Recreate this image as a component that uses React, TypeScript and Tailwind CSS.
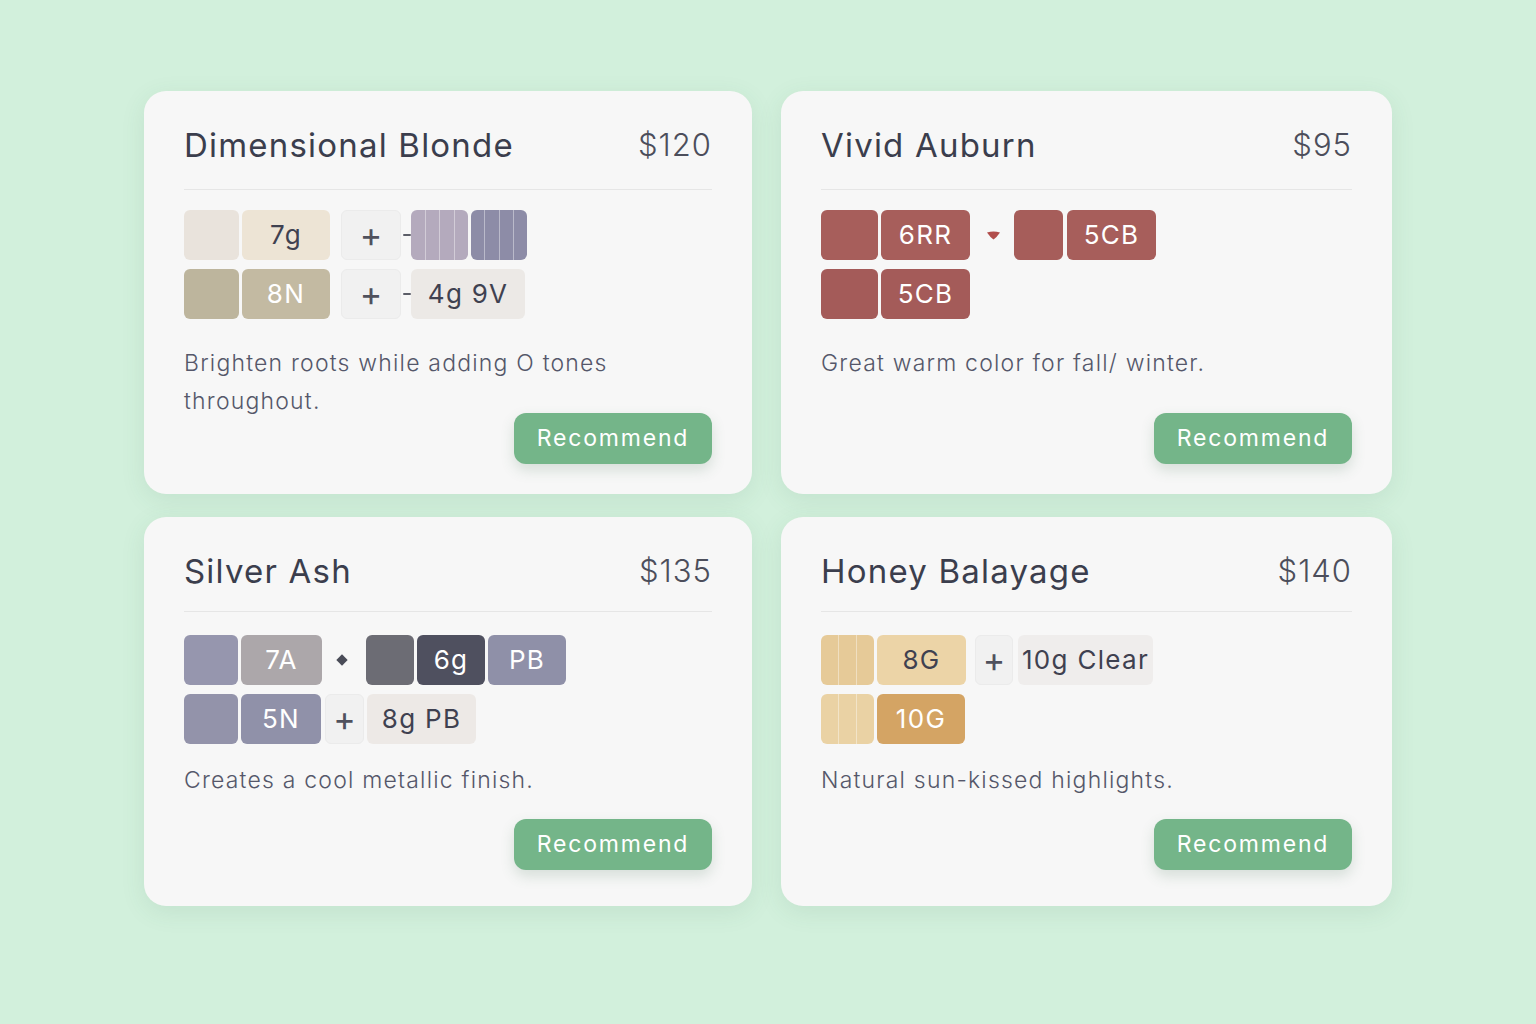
import React from 'react';

type Chip =
  | { kind: 'swatch'; w: number; bg: string; label?: string; light?: boolean; stripes?: number; ml?: number }
  | { kind: 'plus'; w: number; ml?: number }
  | { kind: 'dash'; ml?: number }
  | { kind: 'heart'; ml?: number }
  | { kind: 'diamond'; ml?: number };

interface Formula {
  title: string;
  price: string;
  rows: Chip[][];
  note: React.ReactNode;
  compact?: boolean;
}

const formulas: Formula[] = [
  {
    title: 'Dimensional Blonde',
    price: '$120',
    rows: [
      [
        { kind: 'swatch', w: 55, bg: 'bg-[#e9e3dc]' },
        { kind: 'swatch', w: 88, bg: 'bg-[#ede4d5]', label: '7g', ml: 3 },
        { kind: 'plus', w: 60, ml: 11 },
        { kind: 'dash', ml: 2 },
        { kind: 'swatch', w: 57, bg: 'bg-[#b4aabd]', stripes: 4 },
        { kind: 'swatch', w: 56, bg: 'bg-[#8d8ca7]', stripes: 4, ml: 3 },
      ],
      [
        { kind: 'swatch', w: 55, bg: 'bg-[#bdb59d]' },
        { kind: 'swatch', w: 88, bg: 'bg-[#c3baa2]', label: '8N', light: true, ml: 3 },
        { kind: 'plus', w: 60, ml: 11 },
        { kind: 'dash', ml: 2 },
        { kind: 'swatch', w: 114, bg: 'bg-[#ece9e6]', label: '4g 9V' },
      ],
    ],
    note: 'Brighten roots while adding O tones throughout.',
  },
  {
    title: 'Vivid Auburn',
    price: '$95',
    rows: [
      [
        { kind: 'swatch', w: 57, bg: 'bg-[#a75e5b]' },
        { kind: 'swatch', w: 89, bg: 'bg-[#a75e5b]', label: '6RR', light: true, ml: 3 },
        { kind: 'heart', ml: 16 },
        { kind: 'swatch', w: 49, bg: 'bg-[#a65d5a]', ml: 13 },
        { kind: 'swatch', w: 89, bg: 'bg-[#a75e5b]', label: '5CB', light: true, ml: 4 },
      ],
      [
        { kind: 'swatch', w: 57, bg: 'bg-[#a45b59]' },
        { kind: 'swatch', w: 89, bg: 'bg-[#a45b59]', label: '5CB', light: true, ml: 3 },
      ],
    ],
    note: 'Great warm color for fall/ winter.',
  },
  {
    title: 'Silver Ash',
    price: '$135',
    compact: true,
    rows: [
      [
        { kind: 'swatch', w: 54, bg: 'bg-[#9696ae]' },
        { kind: 'swatch', w: 81, bg: 'bg-[#aca7aa]', label: '7A', light: true, ml: 3 },
        { kind: 'diamond', ml: 16 },
        { kind: 'swatch', w: 48, bg: 'bg-[#6c6c74]', ml: 20 },
        { kind: 'swatch', w: 68, bg: 'bg-[#4f505f]', label: '6g', light: true, ml: 3 },
        { kind: 'swatch', w: 78, bg: 'bg-[#8f90a8]', label: 'PB', light: true, ml: 3 },
      ],
      [
        { kind: 'swatch', w: 54, bg: 'bg-[#9393aa]' },
        { kind: 'swatch', w: 80, bg: 'bg-[#9091a9]', label: '5N', light: true, ml: 3 },
        { kind: 'plus', w: 39, ml: 4 },
        { kind: 'swatch', w: 109, bg: 'bg-[#ede9e6]', label: '8g PB', ml: 3 },
      ],
    ],
    note: 'Creates a cool metallic finish.',
  },
  {
    title: 'Honey Balayage',
    price: '$140',
    compact: true,
    rows: [
      [
        { kind: 'swatch', w: 53, bg: 'bg-[#e6ca98]', stripes: 3 },
        { kind: 'swatch', w: 89, bg: 'bg-[#ecd4a7]', label: '8G', ml: 3 },
        { kind: 'plus', w: 38, ml: 9 },
        { kind: 'swatch', w: 135, bg: 'bg-[#efedec]', label: '10g Clear', ml: 5 },
      ],
      [
        { kind: 'swatch', w: 53, bg: 'bg-[#ead2a4]', stripes: 3 },
        { kind: 'swatch', w: 88, bg: 'bg-[#d4a464]', label: '10G', light: true, ml: 3 },
      ],
    ],
    note: 'Natural sun-kissed highlights.',
  },
];

function ChipView({ chip }: { chip: Chip }) {
  const ml = chip.ml ?? 0;
  if (chip.kind === 'plus') {
    return (
      <div
        className="flex h-full items-center justify-center rounded-md border border-[#ebebeb] bg-[#f1f1f1] text-[34px] leading-none text-[#4f515d]"
        style={{ width: chip.w, marginLeft: ml }}
      >
        +
      </div>
    );
  }
  if (chip.kind === 'dash') {
    return <div className="h-[2px] w-[8px] rounded bg-[#5c5e68]" style={{ marginLeft: ml }} />;
  }
  if (chip.kind === 'heart') {
    return (
      <svg width="15" height="9" viewBox="0 0 15 9" style={{ marginLeft: ml }}>
        <path d="M1 1.5 Q7.5 -0.5 14 1.5 Q11 6 7.5 8.5 Q4 6 1 1.5 Z" fill="#b14d4b" />
      </svg>
    );
  }
  if (chip.kind === 'diamond') {
    return <div className="h-[8px] w-[8px] rotate-45 bg-[#4a4c58]" style={{ marginLeft: ml }} />;
  }
  return (
    <div
      className={`relative flex h-full items-center justify-center overflow-hidden rounded-md text-[26px] leading-none tracking-[1.3px] ${chip.bg} ${
        chip.light ? 'text-white' : 'text-[#3f4150]'
      }`}
      style={{ width: chip.w, marginLeft: ml }}
    >
      {chip.stripes ? (
        <div className="absolute inset-0 flex">
          {Array.from({ length: chip.stripes }).map((_, i) => (
            <div key={i} className="flex-1 border-r border-white/40 last:border-r-0" />
          ))}
        </div>
      ) : null}
      {chip.label && <span className="relative">{chip.label}</span>}
    </div>
  );
}

function FormulaCard({ formula }: { formula: Formula }) {
  const compact = formula.compact;
  return (
    <div
      className={`flex flex-col rounded-[22px] bg-[#f7f7f7] px-10 pt-[34px] shadow-[0_6px_24px_rgba(60,110,80,0.10)] ${
        compact ? 'h-[389px] pb-[36px]' : 'h-[403px] pb-[30px]'
      }`}
    >
      <div className="flex h-[40px] items-center justify-between">
        <h2 className="text-[33px] font-normal leading-[40px] tracking-[1.2px] text-[#3b3e4d]">{formula.title}</h2>
        <span className="text-[31px] font-light leading-[40px] tracking-[1px] text-[#4c4e5b]">{formula.price}</span>
      </div>
      <div className={`h-px bg-[#e6e6e6] ${compact ? 'mt-[20px]' : 'mt-[24px]'}`} />
      <div className={`flex flex-col gap-[9px] ${compact ? 'mt-[23px]' : 'mt-[20px]'}`}>
        {formula.rows.map((row, i) => (
          <div key={i} className="flex h-[50px] items-center">
            {row.map((chip, j) => (
              <ChipView key={j} chip={chip} />
            ))}
          </div>
        ))}
      </div>
      <p
        className={`min-h-0 flex-1 pr-16 text-[23px] font-light leading-[38px] tracking-[1.2px] text-[#55576a] ${
          compact ? 'mt-[17px]' : 'mt-[25px]'
        }`}
      >
        {formula.note}
      </p>
      <div className="flex justify-end">
        <button className="h-[51px] w-[198px] rounded-[12px] bg-[#74b589] text-[23px] tracking-[1.8px] text-white shadow-[0_6px_14px_rgba(60,110,80,0.18)]">
          Recommend
        </button>
      </div>
    </div>
  );
}

export default function App() {
  return (
    <div className="min-h-screen bg-[#d2f0dc] pt-[91px] font-['Inter','Open_Sans',sans-serif]">
      <div className="mx-auto grid w-[1248px] grid-cols-[608px_611px] gap-x-[29px] gap-y-[23px]">
        {formulas.map((f) => (
          <FormulaCard key={f.title} formula={f} />
        ))}
      </div>
    </div>
  );
}
